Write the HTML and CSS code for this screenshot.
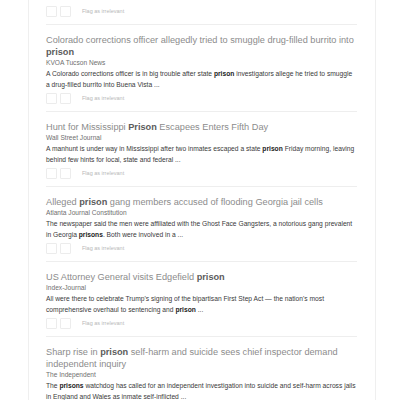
FILE: index.html
```html
<!DOCTYPE html>
<html>
<head>
<meta charset="utf-8">
<link rel="stylesheet" href="styles.css">
</head>
<body>
<div class="panel">
  <div class="item item-cut">
    <div class="flag"><span class="box"></span><span class="box"></span><span class="flag-text">Flag as irrelevant</span></div>
  </div>
  <div class="item">
    <div class="title">Colorado corrections officer allegedly tried to smuggle drug-filled burrito into <b>prison</b></div>
    <div class="source">KVOA Tucson News</div>
    <div class="snippet">A Colorado corrections officer is in big trouble after state <b>prison</b> investigators allege he tried to smuggle a drug-filled burrito into Buena Vista ...</div>
    <div class="flag"><span class="box"></span><span class="box"></span><span class="flag-text">Flag as irrelevant</span></div>
  </div>
  <div class="item">
    <div class="title">Hunt for Mississippi <b>Prison</b> Escapees Enters Fifth Day</div>
    <div class="source">Wall Street Journal</div>
    <div class="snippet">A manhunt is under way in Mississippi after two inmates escaped a state <b>prison</b> Friday morning, leaving behind few hints for local, state and federal ...</div>
    <div class="flag"><span class="box"></span><span class="box"></span><span class="flag-text">Flag as irrelevant</span></div>
  </div>
  <div class="item">
    <div class="title">Alleged <b>prison</b> gang members accused of flooding Georgia jail cells</div>
    <div class="source">Atlanta Journal Constitution</div>
    <div class="snippet">The newspaper said the men were affiliated with the Ghost Face Gangsters, a notorious gang prevalent in Georgia <b>prisons</b>. Both were involved in a ...</div>
    <div class="flag"><span class="box"></span><span class="box"></span><span class="flag-text">Flag as irrelevant</span></div>
  </div>
  <div class="item">
    <div class="title">US Attorney General visits Edgefield <b>prison</b></div>
    <div class="source">Index-Journal</div>
    <div class="snippet">All were there to celebrate Trump's signing of the bipartisan First Step Act — the nation's most comprehensive overhaul to sentencing and <b>prison</b> ...</div>
    <div class="flag"><span class="box"></span><span class="box"></span><span class="flag-text">Flag as irrelevant</span></div>
  </div>
  <div class="item">
    <div class="title">Sharp rise in <b>prison</b> self-harm and suicide sees chief inspector demand independent inquiry</div>
    <div class="source">The Independent</div>
    <div class="snippet">The <b>prisons</b> watchdog has called for an independent investigation into suicide and self-harm across jails in England and Wales as inmate self-inflicted ...</div>
    <div class="flag"><span class="box"></span><span class="box"></span><span class="flag-text">Flag as irrelevant</span></div>
  </div>
</div>
</body>
</html>
```
FILE: styles.css
```css
html, body {
  margin: 0;
  padding: 0;
  background: #ffffff;
}
body {
  font-family: "Liberation Sans", Arial, sans-serif;
}
.panel {
  margin-left: 28px;
  width: 311px;
  padding: 0 18px 0 17px;
  border-left: 1px solid #efefef;
  border-right: 1px solid #efefef;
  min-height: 400px;
}
.item {
  border-top: 1px solid #eeeeee;
  padding: 9px 0 7px 0;
}
.item-cut {
  border-top: none;
  padding-top: 3px;
}
.title {
  font-size: 9.2px;
  line-height: 12px;
  color: #8c8c8c;
}
.title b {
  color: #5c5c5c;
}
.source {
  font-size: 6.6px;
  line-height: 10px;
  color: #6f6f6f;
}
.snippet {
  font-size: 6.7px;
  line-height: 11px;
  color: #3a3a3a;
}
.snippet b {
  color: #222222;
}
.flag {
  display: flex;
  align-items: center;
  margin-top: 2px;
  height: 12px;
}
.box {
  width: 9px;
  height: 9px;
  border: 1px solid #ececec;
  border-radius: 1px;
  margin-right: 3px;
}
.box + .box {
  margin-right: 11px;
}
.flag-text {
  font-size: 5.5px;
  color: #b8b8b8;
}
```
